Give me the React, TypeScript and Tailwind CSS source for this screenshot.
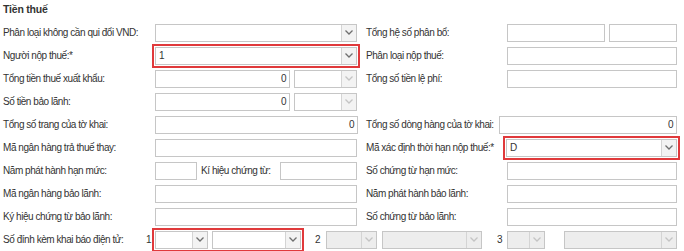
import React from "react";

const Chevron = ({ light }: { light?: boolean }) => (
  <svg width="8" height="5" viewBox="0 0 8 5" className="block">
    <polyline points="0.5,0.5 4,4 7.5,0.5" fill="none" stroke={light ? "#c4c4c4" : "#6f6f6f"} strokeWidth="1.3" />
  </svg>
);

const Input = ({ w, value }: { w: string; value?: string }) => (
  <div className={`${w} h-[18px] shrink-0 border border-[#c6c6c6] bg-white flex items-center justify-end pr-[3px] text-[#333]`}>
    {value}
  </div>
);

const Select = ({ w, value, disabled, lightArrow }: { w: string; value?: string; disabled?: boolean; lightArrow?: boolean }) => (
  <div className={`${w} h-[18px] shrink-0 border border-[#c6c6c6] flex ${disabled ? "bg-[#ededed]" : "bg-white"}`}>
    <div className="flex-1 flex items-center pl-[3px] text-[#333]">{value}</div>
    <div className={`w-[15px] border-l border-[#d4d4d4] flex items-center justify-center ${disabled ? "bg-[#ededed]" : "bg-[#f3f3f3]"}`}>
      <Chevron light={disabled || lightArrow} />
    </div>
  </div>
);

const Row = ({ children }: { children: React.ReactNode }) => (
  <div className="flex h-[23px] items-center">{children}</div>
);

const LL = ({ children }: { children?: React.ReactNode }) => (
  <div className="w-[155px] shrink-0 pl-[3px] whitespace-nowrap">{children}</div>
);

const RL = ({ w, children }: { w: string; children?: React.ReactNode }) => (
  <div className={`${w} shrink-0 whitespace-nowrap`}>{children}</div>
);

export default function App() {
  return (
    <div
      className="w-[684px] h-[251px] overflow-hidden bg-white text-[10px] tracking-[-0.45px] leading-none text-[#333]"
      style={{ fontFamily: '"Liberation Sans", Arial, sans-serif' }}
    >
      <div className="h-[21px] pl-[3px] pt-[4px] font-bold text-[10.5px] tracking-[-0.2px]">Tiền thuế</div>
      <Row>
        <LL>Phân loại không cần qui đổi VND:</LL>
        <Select w="w-[202px]" />
        <div className="w-[9px] shrink-0" />
        <RL w="w-[141px]">Tổng hệ số phân bổ:</RL>
        <Input w="w-[98px]" />
        <div className="w-[4px] shrink-0" />
        <Input w="w-[68px]" />
      </Row>
      <Row>
        <LL>Người nộp thuế:*</LL>
        <div className="outline-2 outline-offset-1 outline-[#e0393b] outline">
          <Select w="w-[202px]" value="1" />
        </div>
        <div className="w-[9px] shrink-0" />
        <RL w="w-[141px]">Phân loại nộp thuế:</RL>
        <Input w="w-[170px]" />
      </Row>
      <Row>
        <LL>Tổng tiền thuế xuất khẩu:</LL>
        <Input w="w-[135px]" value="0" />
        <div className="w-[4px] shrink-0" />
        <Select w="w-[63px]" lightArrow />
        <div className="w-[9px] shrink-0" />
        <RL w="w-[141px]">Tổng số tiền lệ phí:</RL>
        <Input w="w-[170px]" />
      </Row>
      <Row>
        <LL>Số tiền bảo lãnh:</LL>
        <Input w="w-[135px]" value="0" />
        <div className="w-[4px] shrink-0" />
        <Select w="w-[63px]" lightArrow />
      </Row>
      <Row>
        <LL>Tổng số trang của tờ khai:</LL>
        <Input w="w-[203px]" value="0" />
        <div className="w-[8px] shrink-0" />
        <RL w="w-[133px]">Tổng số dòng hàng của tờ khai:</RL>
        <Input w="w-[178px]" value="0" />
      </Row>
      <Row>
        <LL>Mã ngân hàng trả thuế thay:</LL>
        <Input w="w-[202px]" />
        <div className="w-[9px] shrink-0" />
        <RL w="w-[140px]">Mã xác định thời hạn nộp thuế:*</RL>
        <div className="outline-2 outline-offset-1 outline-[#e0393b] outline">
          <Select w="w-[171px]" value="D" />
        </div>
      </Row>
      <Row>
        <LL>Năm phát hành hạn mức:</LL>
        <Input w="w-[42px]" />
        <div className="w-[83px] shrink-0 pl-[4px] whitespace-nowrap">Kí hiệu chứng từ:</div>
        <Input w="w-[77px]" />
        <div className="w-[9px] shrink-0" />
        <RL w="w-[141px]">Số chứng từ hạn mức:</RL>
        <Input w="w-[170px]" />
      </Row>
      <Row>
        <LL>Mã ngân hàng bảo lãnh:</LL>
        <Input w="w-[202px]" />
        <div className="w-[9px] shrink-0" />
        <RL w="w-[141px]">Năm phát hành bảo lãnh:</RL>
        <Input w="w-[170px]" />
      </Row>
      <Row>
        <LL>Ký hiệu chứng từ bảo lãnh:</LL>
        <Input w="w-[202px]" />
        <div className="w-[9px] shrink-0" />
        <RL w="w-[141px]">Số chứng từ bảo lãnh:</RL>
        <Input w="w-[170px]" />
      </Row>
      <Row>
        <div className="w-[146px] shrink-0 pl-[3px] whitespace-nowrap">Số đính kèm khai báo điện tử:</div>
        <div className="w-[9px] shrink-0">1</div>
        <div className="flex gap-[4px] outline-2 outline-offset-1 outline-[#e0393b] outline">
          <Select w="w-[53px]" />
          <Select w="w-[89px]" />
        </div>
        <div className="w-[25px] shrink-0 pl-[14px]">2</div>
        <div className="flex gap-[5px]">
          <Select w="w-[51px]" disabled />
          <Select w="w-[100px]" disabled />
        </div>
        <div className="w-[25px] shrink-0 pl-[15px]">3</div>
        <Select w="w-[38px]" disabled />
        <div className="w-[19px] shrink-0" />
        <Select w="w-[113px]" disabled />
      </Row>
    </div>
  );
}
